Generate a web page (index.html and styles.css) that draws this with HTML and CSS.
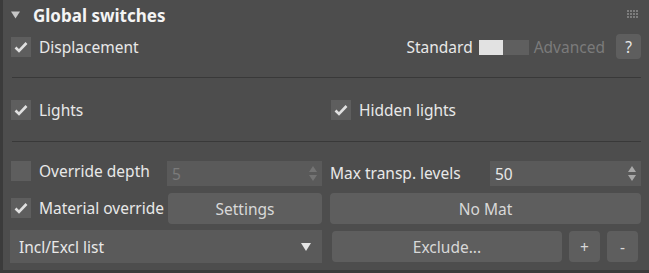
FILE: index.html
```html
<!DOCTYPE html>
<html lang="en">
<head>
    <meta charset="UTF-8">
    <title>Global switches</title>
    <link rel="stylesheet" href="styles.css">
</head>
<body>
    <div class="panel">
        <div class="head">
            <svg class="caret" viewBox="0 0 10 8"><path d="M0 0h10L5 8z"/></svg>
            <span class="title">Global switches</span>
            <svg class="grip" viewBox="0 0 11 8">
                <rect x="0" y="0" width="2" height="2"/><rect x="3" y="0" width="2" height="2"/><rect x="6" y="0" width="2" height="2"/><rect x="9" y="0" width="2" height="2"/>
                <rect x="0" y="3" width="2" height="2"/><rect x="3" y="3" width="2" height="2"/><rect x="6" y="3" width="2" height="2"/><rect x="9" y="3" width="2" height="2"/>
                <rect x="0" y="6" width="2" height="2"/><rect x="3" y="6" width="2" height="2"/><rect x="6" y="6" width="2" height="2"/><rect x="9" y="6" width="2" height="2"/>
            </svg>
        </div>

        <div class="row first">
            <label class="check"><span class="box"><svg viewBox="0 0 20 20"><path d="M4.5 10.5l3.5 3.5 7.5-8"/></svg></span>Displacement</label>
            <div class="mode">
                <span>Standard</span>
                <span class="toggle"><i></i></span>
                <span class="dim">Advanced</span>
                <button class="help">?</button>
            </div>
        </div>

        <div class="sep"></div>

        <div class="row pair">
            <label class="check"><span class="box"><svg viewBox="0 0 20 20"><path d="M4.5 10.5l3.5 3.5 7.5-8"/></svg></span>Lights</label>
            <label class="check"><span class="box"><svg viewBox="0 0 20 20"><path d="M4.5 10.5l3.5 3.5 7.5-8"/></svg></span>Hidden lights</label>
        </div>

        <div class="sep second"></div>

        <div class="grid">
            <div class="cell">
                <label class="check"><span class="box"></span>Override depth</label>
                <div class="spin off left-spin"><span>5</span>
                    <svg viewBox="0 0 8 16"><path d="M4 0l4 6H0zM0 9h8l-4 6z"/></svg>
                </div>
            </div>
            <div class="cell">
                <span class="label">Max transp. levels</span>
                <div class="spin right-spin"><span>50</span>
                    <svg viewBox="0 0 8 16"><path d="M4 0l4 6H0zM0 9h8l-4 6z"/></svg>
                </div>
            </div>

            <div class="cell">
                <label class="check"><span class="box"><svg viewBox="0 0 20 20"><path d="M4.5 10.5l3.5 3.5 7.5-8"/></svg></span>Material override</label>
                <button class="btn settings">Settings</button>
            </div>
            <div class="cell">
                <button class="btn wide">No Mat</button>
            </div>

            <div class="cell">
                <div class="dropdown"><span>Incl/Excl list</span>
                    <svg viewBox="0 0 10 8"><path d="M0 0h10L5 8z"/></svg>
                </div>
            </div>
            <div class="cell tools">
                <button class="btn exclude">Exclude...</button>
                <button class="btn small">+</button>
                <button class="btn small">-</button>
            </div>
        </div>
    </div>
</body>
</html>
```

FILE: styles.css
```css
:root {
    --bg: #4d4d4d;
    --edge: #3b3b3b;
    --line: #393939;
    --box: #5e5e5e;
    --field: #5a5a5a;
    --button: #5e5e5e;
    --text: #e8e8e8;
    --muted: #7b7b7b;
}

body {
    margin: 0;
    background: var(--bg);
    font-family: 'Noto Sans', 'Open Sans', sans-serif;
    font-size: 15.5px;
    color: var(--text);
}

.panel {
    width: 649px;
    height: 273px;
    box-sizing: border-box;
    border-left: 3px solid var(--edge);
    border-bottom: 3px solid var(--edge);
    padding: 0 8px 0 7px;
}

.head {
    height: 30px;
    display: flex;
    align-items: center;
}
.caret {
    width: 9px;
    height: 8px;
    fill: #c6c6c6;
    margin-left: 1px;
    margin-right: 13px;
}
.title {
    font-weight: bold;
    font-size: 17px;
    color: #f4f4f4;
}
.grip {
    margin-left: auto;
    margin-right: 3px;
    margin-top: -2px;
    width: 11px;
    height: 8px;
    fill: #7d7d7d;
}

.row {
    display: flex;
    align-items: center;
}
.first {
    height: 25px;
    margin-top: 4px;
    justify-content: space-between;
}
.pair {
    height: 20px;
    margin-top: 22px;
}
.pair .check:first-child {
    width: 320px;
}

.sep {
    height: 1px;
    background: var(--line);
    margin-top: 18px;
    margin-left: 2px;
}
.sep.second {
    margin-top: 21px;
}

.check {
    display: flex;
    align-items: center;
    gap: 8px;
    white-space: nowrap;
}
.box {
    width: 20px;
    height: 20px;
    margin-left: 1px;
    background: var(--box);
    display: flex;
}
.box svg {
    width: 20px;
    height: 20px;
    fill: none;
    stroke: #e0e0e0;
    stroke-width: 2.6;
}

.mode {
    display: flex;
    align-items: center;
    height: 25px;
}
.toggle {
    width: 50px;
    height: 15px;
    background: #5f5f5f;
    margin: 1px 5px 0 6px;
    display: flex;
}
.toggle i {
    width: 24px;
    background: #e2e2e2;
}
.dim {
    color: var(--muted);
}
.help {
    width: 25px;
    height: 25px;
    margin-left: 11px;
    border: none;
    border-radius: 4px;
    background: var(--button);
    color: #e8e8e8;
    font-family: inherit;
    font-size: 15.5px;
    padding: 0;
}

.grid {
    margin-top: 19px;
    display: grid;
    grid-template-columns: 312px 311px;
    grid-template-rows: 26px 31px 33px;
    column-gap: 8px;
    row-gap: 6px;
}
.cell {
    display: flex;
    align-items: flex-start;
    justify-content: space-between;
}
.cell .check {
    height: 20px;
}
.cell:nth-child(3) .check {
    margin-top: 5px;
}
.label {
    height: 25px;
    line-height: 25px;
}

.spin {
    height: 25px;
    background: var(--field);
    display: flex;
    align-items: center;
    justify-content: space-between;
    box-sizing: border-box;
    padding: 0 5px 0 5px;
}
.spin svg {
    width: 8px;
    height: 16px;
    fill: #a8a8a8;
}
.left-spin {
    width: 155px;
}
.right-spin {
    width: 151px;
}
.spin.off {
    color: var(--muted);
}
.spin.off svg {
    fill: #747474;
}

.btn {
    border: none;
    border-radius: 4px;
    background: var(--button);
    color: #d8d8d8;
    font-family: inherit;
    font-size: 15.5px;
    padding: 0;
    height: 31px;
}
.settings {
    width: 154px;
}
.wide {
    width: 100%;
}

.dropdown {
    width: 312px;
    height: 33px;
    background: var(--field);
    display: flex;
    align-items: center;
    justify-content: space-between;
    box-sizing: border-box;
    padding: 0 11px 0 9px;
}
.dropdown svg {
    width: 10px;
    height: 8px;
    fill: #e4e4e4;
}

.tools {
    justify-content: flex-start;
    gap: 7px;
    padding-left: 2px;
    padding-top: 1px;
}
.exclude {
    width: 230px;
}
.small {
    width: 31px;
}
```
